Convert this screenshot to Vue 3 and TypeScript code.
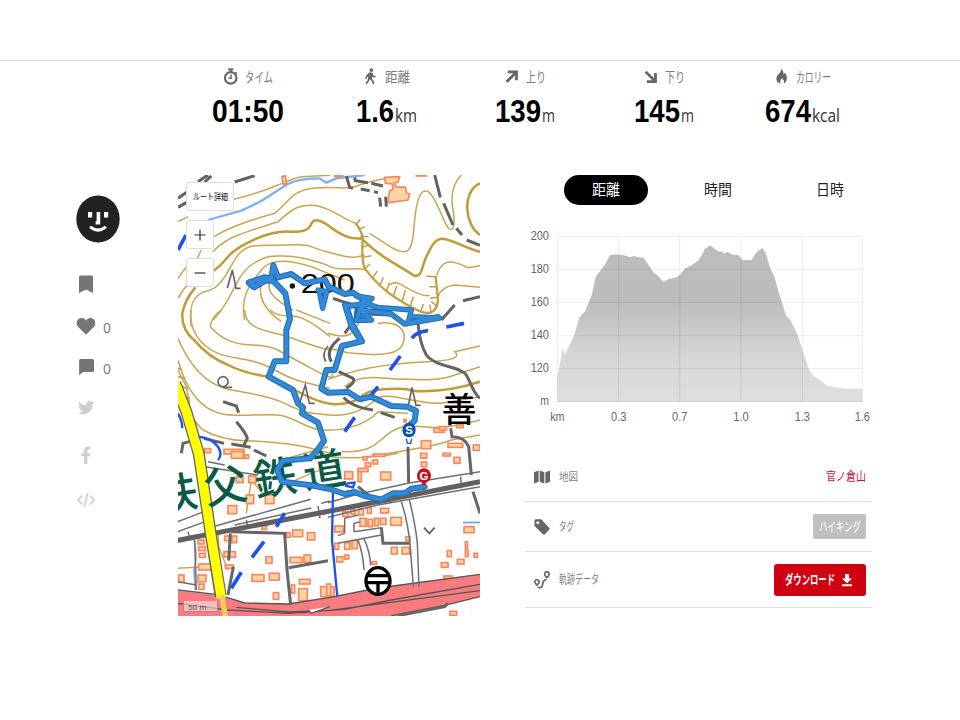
<script setup lang="ts">
import { h } from "vue";

interface FitProps {
  text: string;
  w: number;
  size: number;
}

// single line of text squeezed to a fixed width
const FitText = (p: FitProps) =>
  h("svg", { width: p.w, height: p.size, overflow: "visible", style: { display: "block" } }, [
    h(
      "text",
      {
        x: 0,
        y: p.size * 0.87,
        "font-size": p.size,
        fill: "currentColor",
        textLength: p.w,
        lengthAdjust: "spacingAndGlyphs",
      },
      p.text,
    ),
  ]);
FitText.props = ["text", "w", "size"];

const stats = [
  { icon: "time", label: "タイム", lw: 28, value: "01:50", vw: 72, unit: "", uw: 0 },
  { icon: "walk", label: "距離", lw: 25, value: "1.6", vw: 38, unit: "km", uw: 22 },
  { icon: "up", label: "上り", lw: 20, value: "139", vw: 46, unit: "m", uw: 13 },
  { icon: "down", label: "下り", lw: 20, value: "145", vw: 46, unit: "m", uw: 13 },
  { icon: "fire", label: "カロリー", lw: 35, value: "674", vw: 46, unit: "kcal", uw: 28 },
];

const tabs = ["距離", "時間", "日時"];

const contours = [
  "M0 155L30 140M168 88Q240 70 300 45T370 20L456 16",
  "M108 200Q140 180 180 165T290 130C330 100 340 60 410 54S500 60 530 50S600 25 660 20",
  "M104 245Q140 210 180 195T300 155C330 130 350 105 400 106S500 150 533 160",
  "M30 320Q60 260 70 240M0 325L25 290M0 385Q20 350 30 345",
  "M40 470C30 400 50 370 90 362S150 300 175 262S230 225 290 226S370 218 400 230S500 262 530 262L560 256",
  "M105 450C160 400 170 320 220 285S300 258 330 259S430 275 456 290S530 290 565 300",
  "M200 450C185 380 215 345 250 300S370 280 400 290L500 330",
  "M310 455C260 420 240 380 250 340S290 325 300 330M345 420C290 390 265 365 275 335",
  "M40 420C30 480 70 530 120 550S220 560 290 600S400 640 456 655",
  "M130 420Q100 440 97 470Q140 520 210 524T300 540T400 595T460 612",
  "M200 420C200 470 250 480 300 492S400 530 456 540M275 420Q300 440 340 438T456 500M355 420L456 460",
  "M0 505C40 600 90 640 140 655S260 670 320 700S400 730 456 735S560 720 590 690S700 700 790 700L906 680",
  "M0 570C30 680 80 720 130 731S250 730 300 735S380 775 430 780S560 770 600 725L690 730",
  "M15 660Q30 740 75 780Q130 810 200 812T330 822T456 850",
  "M490 845C590 850 600 810 640 785S700 770 760 772S860 760 906 750",
  "M560 862Q640 850 720 835T820 810L906 795",
  "M575 190L640 232C690 260 700 240 705 200S712 80 735 65S780 110 800 155S835 175 825 120S830 35 850 15",
  "M635 345Q650 330 680 350Q740 385 755 375M775 320Q785 285 805 278T870 293L906 287M780 380Q790 350 830 345L906 352",
  "M600 460C680 450 690 500 670 530S580 555 510 548L450 535M450 490Q510 510 530 480T540 450",
  "M450 628Q500 610 570 595T750 575T830 545L906 528M500 650C550 610 600 625 660 627S780 635 830 615L906 590",
  "M0 1195Q80 1190 130 1188M120 1085L122 1130L150 1200M280 1000L220 930L205 1030M310 870L450 830",
  "M330 940L400 910L456 890M450 860Q560 870 660 850M0 600L25 650L35 700",
];

const thickContours = [
  "M108 302Q130 285 150 260T230 208T340 185T400 162T460 173T550 205Q590 245 640 275T710 318C735 318 730 290 745 260S770 205 795 206S860 235 906 245",
  "M52 352Q20 390 13 430Q10 480 50 512Q90 560 150 585Q200 610 270 620Q330 650 380 675T470 703Q530 700 550 680T630 657T700 662Q800 670 906 635",
  "M906 40C850 65 860 165 906 195",
];

const cliff = "M533 160Q550 180 554 205Q550 270 560 295Q600 350 660 388T740 428Q775 435 780 390L773 320";
const cliffTicks =
  "M535 162L547 148M541 180L560 170M547 198L572 200M554 232L572 225M556 262L580 257M562 294L576 282M585 322L598 303M606 345L616 322M626 362L634 338M645 382L656 348M672 396L682 360M696 412L706 380M728 425L736 402M760 430L755 404M779 410L760 395M779 382L756 385M774 350L754 350M773 320L745 319";

const thinLines = [
  "M0 1055L78 1025M0 1085L82 1055M112 1068L398 988M170 1065L400 1014M80 890L240 915M90 875L140 885M430 1000L456 993",
  "M30 1085L34 1100M205 1050L208 1065M420 1008L426 1045M848 920L850 955M640 985L637 1000",
  "M450 998L530 975L690 940L906 905M450 1042L600 1005L906 950",
  "M670 995Q688 1050 696 1120L706 1250M694 990Q712 1060 718 1120L723 1250",
  "M500 1090L500 1045L540 1035M528 1085L528 1060L545 1056M528 1085L610 1073M480 1097L500 1090M480 1120L610 1095M540 1110Q555 1150 558 1200M557 1105Q575 1140 578 1185",
  "M50 1110L55 1260M505 435L520 475M0 1235L55 1245",
];

const roads = [
  "M160 1085L320 1090L327 1200L338 1305",
  "M157 1090L152 1172M166 1190L150 1275M332 1193L450 1172",
  "M720 460Q725 520 745 555C770 590 850 590 865 615S885 670 906 685",
  "M690 830L692 938M818 775L822 800Q860 800 872 830L880 915",
  "M610 1072L615 1120L695 1120M540 950L600 998L640 990M885 965L906 1030M660 1337L800 1310L810 1300",
  "M10 850L15 820L45 812",
];

const dashes = [
  "M770 15L787 82M797 100L825 165M835 175L852 195M866 210L906 226M906 380L855 392M830 405L790 450",
  "M505 18L515 52L525 55M548 57L575 62M588 65L600 68M530 22L532 32L570 38M580 40L615 48M605 83L608 110M623 80L625 110",
  "M0 85L50 50M0 112L30 95M60 35L90 15M80 36L100 18M170 36L230 17",
  "M135 695L175 708L182 728M175 755Q205 790 208 805L198 825M78 805L138 820M160 822L218 832M228 840L265 858",
  "M482 605L525 625Q535 635 505 655M497 682Q520 710 585 720M608 728L650 742M460 575Q440 540 485 505M500 490L515 470M465 385L525 405M575 433L650 435",
];

const blueDashes =
  "M0 240L24 195M805 471L858 460M702 505Q715 485 750 482M636 600L667 558M580 675L600 650M500 785L530 742M222 1162L258 1115M160 1255L190 1207M295 1070L320 1030";

const streams = "M90 150L190 122Q240 100 270 80T330 42Q360 25 425 25L445 38L475 25L560 15";

const buildings: number[][] = [
  [80, 836, 18, 12], [138, 838, 60, 14], [160, 845, 36, 20], [200, 855, 12, 10],
  [150, 1007, 26, 24], [205, 975, 22, 26], [212, 918, 22, 20], [262, 975, 26, 26], [175, 920, 20, 18],
  [60, 1110, 18, 12], [62, 1130, 20, 12], [64, 1150, 18, 12], [62, 1182, 38, 18], [60, 1215, 24, 20],
  [62, 1242, 16, 16], [2, 1215, 16, 22], [140, 1098, 18, 14], [162, 1098, 14, 20], [138, 1145, 34, 16],
  [142, 1185, 24, 10], [344, 1080, 30, 20], [388, 1088, 22, 22], [264, 1160, 18, 20], [222, 1214, 36, 20],
  [274, 1210, 30, 20], [286, 1268, 16, 20], [336, 1162, 36, 16], [378, 1155, 20, 22], [364, 1228, 32, 14],
  [362, 1256, 26, 36], [428, 1250, 40, 30], [340, 1245, 10, 24], [252, 1068, 14, 10], [326, 1088, 10, 14],
  [730, 812, 28, 24], [730, 852, 14, 12], [810, 820, 44, 12], [768, 775, 30, 12], [785, 770, 20, 10],
  [836, 765, 20, 8], [886, 825, 20, 16], [795, 850, 22, 8], [678, 748, 6, 8], [555, 860, 12, 10],
  [585, 852, 36, 7], [500, 905, 24, 22], [540, 895, 30, 10], [540, 905, 10, 30], [562, 878, 16, 12],
  [608, 906, 30, 24], [585, 870, 14, 12], [828, 862, 18, 18], [728, 850, 18, 14], [730, 876, 16, 14],
  [494, 1025, 16, 14], [518, 1018, 14, 14], [542, 1015, 14, 20], [568, 1012, 12, 18], [608, 1015, 24, 14],
  [638, 1042, 32, 24], [546, 1045, 18, 24], [570, 1048, 14, 22], [590, 1045, 12, 22], [608, 1045, 16, 18],
  [470, 1068, 26, 18], [500, 1118, 16, 20], [522, 1112, 16, 24], [476, 1160, 18, 16], [500, 1155, 12, 12],
  [640, 1132, 18, 20], [672, 1132, 22, 20], [684, 1100, 12, 12], [470, 1120, 12, 18], [582, 1175, 14, 8],
  [858, 1070, 30, 18], [808, 1142, 12, 18], [790, 1178, 20, 14], [838, 1168, 20, 14], [862, 1115, 6, 20],
  [862, 1140, 8, 20], [888, 1150, 10, 12], [798, 1218, 24, 8], [816, 1324, 20, 12], [446, 1242, 12, 36],
  [470, 15, 24, 4], [715, 13, 30, 5],
];

const track =
  "M693 768L710 752L714 722L688 710L640 708L580 680L545 688L510 666L450 668L430 656L445 600L470 600L492 528L552 514L522 462L505 408L540 405L565 395L525 368L500 372L452 350L440 328L380 340L340 312L300 322L286 286L280 325L258 322L212 338L228 352L262 332L285 332L322 370L336 446L325 480L325 574L290 574L272 620L345 660L360 700L375 712L372 730L420 758L438 812L415 845L395 865L315 872L297 900L312 935L400 946L456 957L500 972L530 966L560 978L610 988L645 970L680 970L700 956L740 950";
const trackKnots = [
  "M780 440L690 460L700 420L600 412L560 400L545 420L535 452L580 450L548 420L640 432L680 462L785 444L700 440",
  "M500 405L520 470L548 512M425 370L434 415L446 365L420 360M535 378L582 385L560 410M215 336L230 348L250 334",
];

const elevation =
  "M112 712L112 635L120 595L129 550L134 572L147 545L163 510L178 460L185 450L196 440L203 420L214 395L228 335L240 320L256 297L270 272L285 269L312 272L330 278L340 274L355 278L371 279L390 308L402 325L415 335L430 352L445 344L470 338L482 328L494 312L515 302L534 288L546 270L554 253L571 242L588 256L600 262L606 260L613 267L622 261L638 270L655 271L668 287L695 286L708 264L727 249L737 264L752 315L763 335L775 380L790 427L799 454L811 467L832 508L848 560L868 615L882 635L903 648L922 663L945 668L980 672L1027 672L1027 712Z";
const gridX = [112, 296, 479, 663, 847, 1027];
const gridY = [215, 314, 413, 513, 612, 711];
const yLabels = ["200", "180", "160", "140", "120", "m"];
const xLabels = ["km", "0.3", "0.7", "1.0", "1.3", "1.6"];
const axisWidth: Record<string, number> = { m: 26, km: 43 };
</script>

<template>
  <div class="page">
    <header class="topbar"></header>

    <section class="stats">
      <div v-for="s in stats" :key="s.label" class="stat">
        <div class="stat-label">
          <svg class="stat-icon" viewBox="0 0 14 16">
            <g v-if="s.icon === 'time'" fill="none" stroke="currentColor">
              <circle cx="7.2" cy="9.3" r="5.4" stroke-width="2" />
              <path d="M4.8 1.2h4.800M7.200 1v3M11.400 4.200l1.400 1.200" stroke-width="2" />
              <path d="M7.600 6.200v3.400H5" stroke-width="1.300" />
            </g>
            <g v-else-if="s.icon === 'walk'">
              <circle cx="7.800" cy="2" r="1.700" fill="currentColor" />
              <path d="M5.600 4.200h3.200l.8 2.600 2.400 1.200-.6 1.200-2.600-1-.5 1.700 1.600 2 .7 3.100H9l-.7-2.500-1.900-1.900-.9 2.200-2.200 2.400-1.100-1 2-2.400.8-4-1.200.8-.5 1.800H2l.7-2.900z" fill="currentColor" />
            </g>
            <path v-else-if="s.icon === 'up'" d="M3.500 3.600h8.200v8M11.200 4.200L2.400 13" fill="none" stroke="currentColor" stroke-width="2.600" />
            <path v-else-if="s.icon === 'down'" d="M3.500 12.800h8.200v-8M11.200 12.200L2.400 3.600" fill="none" stroke="currentColor" stroke-width="2.600" />
            <path v-else d="M6.600 1.200c2 1.200 2.600 2.600 2.200 4.800l1.500-1.600c1.300 2 2 3.800 1.700 6-.3 2-1.300 3.400-2.800 4.200.6-2 .1-3.400-1.700-5-1.500 1.600-2.200 3-1.700 5C3.400 13.800 2.200 12.200 2.200 10c0-2 1-3.200 2.400-4.600C6 4 6.700 2.800 6.600 1.200z" fill="currentColor" />
          </svg>
          <FitText :text="s.label" :w="s.lw" :size="14" />
        </div>
        <div class="stat-value">
          <FitText class="num" :text="s.value" :w="s.vw" :size="32" />
          <FitText v-if="s.unit" class="unit" :text="s.unit" :w="s.uw" :size="19" />
        </div>
      </div>
    </section>

    <main class="content">
      <aside class="side">
        <svg class="avatar" viewBox="0 0 44 48">
          <ellipse cx="22" cy="24" rx="21.700" ry="23.600" fill="#222" />
          <path d="M12 17h4.200v5.500H12zM28 17h4.200v5.500H28zM20.600 17h3.600v12.400h-4.600v-3.200h1z" fill="#fff" />
          <path d="M15 32.500q7 5.200 14 0" fill="none" stroke="#fff" stroke-width="3" stroke-linecap="round" />
        </svg>
        <div class="side-row bookmark">
          <svg viewBox="0 0 20 20"><path d="M4.500 1.500h11q1.500 0 1.500 1.500v16l-7-3.500L3 19V3q0-1.500 1.500-1.500z" fill="currentColor" /></svg>
        </div>
        <div class="side-row like">
          <svg viewBox="0 0 20 20"><path d="M10 18.800L2 10.800C-.6 7.600 1 2 5.400 2 7.600 2 9.200 3.200 10 4.600 10.800 3.200 12.400 2 14.600 2 19 2 20.600 7.600 18 10.800z" fill="currentColor" /></svg>
          <FitText class="count" text="0" :w="8" :size="14" />
        </div>
        <div class="side-row">
          <svg viewBox="0 0 20 20"><path d="M4.500 2h12q1.500 0 1.500 1.500v10q0 1.500-1.500 1.500H7l-3.900 3.200V3.500Q3.100 2 4.500 2z" fill="currentColor" /></svg>
          <FitText class="count" text="0" :w="8" :size="14" />
        </div>
        <div class="side-row faint">
          <svg viewBox="0 0 20 20"><path d="M18.500 4.500c-.6.3-1.200.5-1.900.6.7-.4 1.200-1 1.400-1.800-.6.4-1.300.6-2.100.8a3.400 3.400 0 0 0-5.800 3.100C7.300 7.100 4.800 5.700 3 3.600c-.9 1.600-.4 3.500 1.100 4.500-.5 0-1-.2-1.500-.4 0 1.600 1.100 3 2.700 3.300-.5.200-1 .2-1.500.1.400 1.300 1.700 2.300 3.100 2.300A6.700 6.700 0 0 1 2 14.800c1.500 1 3.300 1.500 5.200 1.500 6.200 0 9.800-5.200 9.600-10 .7-.5 1.300-1.100 1.700-1.800z" fill="currentColor" /></svg>
        </div>
        <div class="side-row faint fb">
          <svg viewBox="0 0 20 20"><path d="M8 19v-7.700H5.400V8.200H8V6c0-2.900 1.700-4.600 4.300-4.600l2.300.2v2.700h-1.400c-1.300 0-1.800.8-1.800 1.700v2.200h3l-.5 3.100h-2.500V19z" fill="currentColor" /></svg>
        </div>
        <div class="side-row faint embed">
          <svg viewBox="0 0 20 20"><path d="M6.200 5.500L2 10l4.200 4.500M13.800 5.500L18 10l-4.200 4.500M11.600 3L8.400 17" fill="none" stroke="currentColor" stroke-width="1.800" /></svg>
        </div>
      </aside>

      <div class="map">
        <svg class="map-canvas" viewBox="0 15 906 1323" preserveAspectRatio="none">
          <rect x="0" y="15" width="906" height="1323" fill="#fff" />
          <g fill="none" stroke="#c9a550" stroke-width="4.500">
            <path v-for="(d, i) in contours" :key="i" :d="d" />
          </g>
          <g fill="none" stroke="#c39a35" stroke-width="7.500">
            <path v-for="(d, i) in thickContours" :key="i" :d="d" />
          </g>
          <path :d="cliff" fill="none" stroke="#c4a040" stroke-width="7" />
          <path :d="cliffTicks" stroke="#c4a040" stroke-width="4.500" />
          <path d="M0 595L12 600M0 620L22 625M8 650L30 655M18 680L36 685" stroke="#c4a040" stroke-width="5" />
          <path :d="streams" fill="none" stroke="#7fb0f5" stroke-width="7" />
          <path d="M48 1110Q60 1160 48 1200L52 1260M855 1058L906 1057" fill="none" stroke="#6fa6ee" stroke-width="5" />

          <g fill="#ffd5a8" stroke="#f7875c" stroke-width="5">
            <rect v-for="(b, i) in buildings" :key="i" :x="b[0]" :y="b[1]" :width="b[2]" :height="b[3]" />
            <path d="M620 22L665 20L660 36L650 38L652 50L682 52L686 70L695 72L690 90L630 98L635 62L645 58L643 42L622 40z" />
            <path d="M312 20L322 17L326 40L316 43z" />
          </g>

          <path d="M-5 1262L120 1276L200 1300L330 1302L456 1282L600 1254L906 1213L906 1280L800 1306L630 1345L-5 1345z" fill="#f87b80" />
          <g fill="none" stroke="#555" stroke-width="4">
            <path d="M0 1260L120 1274L200 1299L330 1302L456 1282L600 1254L906 1213" />
            <path d="M0 1300L150 1320L330 1330L500 1318L640 1290L906 1243M175 1312L330 1326L450 1322L906 1262M640 1337L800 1306L906 1280M360 1327L385 1328" />
          </g>
          <path d="M390 1320L400 1330L456 1310" fill="#fff" stroke="#555" stroke-width="4" />

          <g fill="none" stroke="#707070" stroke-width="4.500">
            <path v-for="(d, i) in thinLines" :key="i" :d="d" />
          </g>
          <g fill="none" stroke="#666" stroke-width="9">
            <path v-for="(d, i) in roads" :key="i" :d="d" />
          </g>
          <g fill="none" stroke="#626262" stroke-width="9">
            <path v-for="(d, i) in dashes" :key="i" :d="d" />
          </g>
          <path d="M-5 1112L150 1082L456 1023L906 935" fill="none" stroke="#606060" stroke-width="15" />
          <g fill="none">
            <path d="M-8 640L25 725L62 850L98 1090L128 1278" stroke="#666" stroke-width="36" />
            <path d="M-8 640L25 725L62 850L98 1090L130 1285" stroke="#ffff00" stroke-width="28" />
            <path d="M131 1274L142 1340" stroke="#ffcc55" stroke-width="16" />
            <path d="M0 730Q15 760 12 775M62 800Q100 805 118 828T120 870M465 960L462 1110L478 1280M505 948Q500 938 530 938L525 952z" stroke="#2050f0" stroke-width="7" />
            <path :d="blueDashes" stroke="#1e50f0" stroke-width="11" />
          </g>

          <!-- coniferous, broadleaf and field marks -->
          <g fill="none" stroke="#666" stroke-width="5">
            <path d="M148 354L163 300L174 355L188 355M366 696L382 645L394 700L410 700M692 702L702 652L714 706L728 706" />
            <path d="M443 575Q430 550 450 528" />
            <circle cx="135" cy="635" r="15" />
            <path d="M135 652L162 652" />
            <path d="M738 1073L754 1090L770 1073" stroke-width="6" />
          </g>

          <g class="place" fill="#0b5a45" transform="rotate(-9 0 1020)">
            <text x="-62" y="1017" textLength="578">秩父鉄道</text>
          </g>
          <text class="kanji" x="791" y="755">善</text>
          <circle cx="343" cy="348" r="8" fill="#111" />
          <text class="height" x="368" y="370" textLength="162" lengthAdjust="spacingAndGlyphs">200</text>

          <g>
            <ellipse cx="600" cy="1233" rx="36" ry="40" fill="#fff" stroke="#000" stroke-width="10" />
            <path d="M570 1217H630M566 1238H634M600 1238V1270" stroke="#000" stroke-width="10" />
          </g>

          <g fill="none" stroke-linejoin="round" stroke-linecap="round">
            <path d="M536 412L580 450L532 452zM426 362L446 366L434 415z" fill="#2f88d8" stroke="#236fb5" stroke-width="12" />
            <path :d="track" stroke="#236fb5" stroke-width="18" />
            <path v-for="(d, i) in trackKnots" :key="i" :d="d" stroke="#236fb5" stroke-width="16" />
            <path :d="track" stroke="#328ad8" stroke-width="11" />
            <path v-for="(d, i) in trackKnots" :key="'k' + i" :d="d" stroke="#328ad8" stroke-width="10" />
          </g>

          <path d="M685 806L688 820L698 820L701 806" fill="#fff" stroke="#1559b5" stroke-width="4" />
          <ellipse cx="693" cy="780" rx="20" ry="22" fill="#0d50b0" />
          <text class="pin" x="693" y="792">S</text>
          <path d="M726 930L738 948L750 930z" fill="#c8101c" />
          <ellipse cx="738" cy="917" rx="21" ry="22" fill="#c8101c" />
          <text class="pin" x="738" y="929">G</text>

          <path d="M342 15V1338M880 15V1338M0 384H906M0 965H906" stroke="#88889a" stroke-opacity=".13" stroke-width="2" />
        </svg>
        <div class="map-controls">
          <button class="detail"><FitText text="ルート詳細" :w="35" :size="9" /></button>
          <button><svg viewBox="0 0 12 12"><path d="M.5 6H11.500M6 .500V11.500" stroke="#333" stroke-width="1.200" /></svg></button>
          <button><svg viewBox="0 0 12 12"><path d="M.5 6H11.500" stroke="#333" stroke-width="1.200" /></svg></button>
        </div>
        <div class="scale">50 m</div>
      </div>

      <section class="detail-panel">
        <nav class="tabs">
          <button v-for="(t, i) in tabs" :key="t" :class="{ active: i === 0 }">
            <FitText :text="t" :w="28" :size="15" />
          </button>
        </nav>

        <svg class="chart" viewBox="0 190 1080 600">
          <defs>
            <linearGradient id="elev" gradientUnits="userSpaceOnUse" x1="0" y1="215" x2="0" y2="711">
              <stop offset="0" stop-color="#bdbdbd" />
              <stop offset=".38" stop-color="#bcbcbc" />
              <stop offset=".78" stop-color="#d9d9d9" />
              <stop offset="1" stop-color="#dedede" />
            </linearGradient>
          </defs>
          <path :d="elevation" fill="url(#elev)" />
          <g stroke="#000" stroke-opacity=".075" stroke-width="3">
            <path v-for="x in gridX" :key="x" :d="`M${x} 215V711`" />
            <path v-for="y in gridY" :key="y" :d="`M112 ${y}H1027`" />
          </g>
          <text
            v-for="(t, i) in yLabels"
            :key="t"
            class="axis y"
            x="87"
            :y="(gridY[i] ?? 0) + 10"
            :textLength="axisWidth[t] ?? 55"
            lengthAdjust="spacingAndGlyphs"
          >{{ t }}</text>
          <text
            v-for="(t, i) in xLabels"
            :key="t"
            class="axis x"
            :x="gridX[i]"
            y="770"
            :textLength="axisWidth[t] ?? 46"
            lengthAdjust="spacingAndGlyphs"
          >{{ t }}</text>
        </svg>

        <ul class="info">
          <li>
            <svg class="info-icon" viewBox="0 0 16 16"><path d="M0 3.200L4.600 1.500v11.300L0 14.500zM5.700 1.500l4.600 1.700v11.300l-4.600-1.700zM11.400 3.200L16 1.500v11.300l-4.600 1.700z" fill="currentColor" /></svg>
            <FitText text="地図" :w="19" :size="11" />
            <a class="mountain"><FitText text="官ノ倉山" :w="40" :size="12" /></a>
          </li>
          <li>
            <svg class="info-icon" viewBox="0 0 16 16"><path fill-rule="evenodd" d="M.5 1.500Q.5.300 1.700.300H7.200L15.400 9Q16 9.800 15.400 10.500L10.600 15.500Q9.900 16 9.200 15.400L.5 7zM3.800 2.300a1.500 1.500 0 1 0 .01 0z" fill="currentColor" /></svg>
            <FitText text="タグ" :w="15" :size="12" />
            <span class="tag"><FitText text="ハイキング" :w="42" :size="13" /></span>
          </li>
          <li>
            <svg class="info-icon route" viewBox="0 0 16 18">
              <g fill="none" stroke="currentColor" stroke-width="1.700">
                <path d="M3 14.200Q.5 11.800.9 10.500a2.200 2.200 0 0 1 4.300 0Q5.500 11.800 3 14.200zM12.900 6.500Q10.500 4.500 10.700 3a2.200 2.200 0 0 1 4.400 0Q15.300 4.500 12.900 6.500z" />
                <path d="M3.500 16.300Q7.800 17.500 8.500 14.200C9 10.500 9 9.600 12.700 8.300" />
              </g>
            </svg>
            <FitText text="軌跡データ" :w="40" :size="12" />
            <button class="download">
              <FitText text="ダウンロード" :w="50" :size="13" />
              <svg viewBox="0 0 12 14"><path d="M4 1h4v4.500h3L6 10.300 1 5.500h3zM1 11.300h10v2H1z" fill="#fff" /></svg>
            </button>
          </li>
        </ul>
      </section>
    </main>
  </div>
</template>

<style>
body {
  background: #fff;
}
</style>

<style scoped>
.page {
  width: 960px;
  height: 720px;
  box-sizing: border-box;
  overflow: hidden;
  font-family: "Open Sans", "Noto Sans CJK JP", sans-serif;
  color: #757575;
}

.topbar {
  height: 60px;
  border-bottom: 1px solid #d6d6d6;
}

.stats {
  display: grid;
  grid-template-columns: repeat(5, 1fr);
  width: 693px;
  margin-left: 179px;
  padding-top: 7px;
  height: 107px;
}

.stat-label {
  display: flex;
  align-items: center;
  justify-content: center;
  gap: 7px;
  height: 17px;
  color: #7d7d7d;
}

.stat-icon {
  width: 15px;
  height: 17px;
  color: #666;
}

.stat-value {
  display: flex;
  justify-content: center;
  align-items: flex-end;
  gap: 1px;
  height: 41px;
}

.num {
  color: #000;
  font-family: "Liberation Sans", sans-serif;
  font-weight: bold;
}

.unit {
  color: #333;
  margin-bottom: 2px;
}

.content {
  display: flex;
}

.side {
  width: 102.5px;
  padding: 20px 0 0 75.5px;
  flex: none;
  box-sizing: content-box;
}

.side {
  box-sizing: border-box;
  width: 178px;
}

.avatar {
  display: block;
  width: 44px;
  height: 48px;
}

.side-row {
  display: flex;
  align-items: center;
  gap: 7px;
  height: 20px;
  margin-top: 21px;
}

.side-row > svg:first-child {
  width: 20px;
  height: 20px;
}

.side-row.bookmark {
  margin-top: 31px;
}

.side-row.like {
  margin-top: 22px;
}

.count {
  margin-top: 3px;
}

.faint {
  color: #cfcfcf;
}

.side-row.fb {
  margin-top: 27px;
}

.side-row.embed {
  margin-top: 25px;
}

.map {
  position: relative;
  width: 302px;
  height: 441px;
}

.map-canvas {
  display: block;
  width: 302px;
  height: 441px;
}

.place {
  font-family: "Noto Sans CJK JP", sans-serif;
  font-size: 128px;
  font-weight: 500;
}

.kanji {
  font-family: "Noto Sans CJK JP", sans-serif;
  font-size: 104px;
  fill: #000;
  font-weight: 500;
}

.height {
  font-family: "Liberation Sans", sans-serif;
  font-size: 84px;
  fill: #111;
}

.pin {
  font-family: "Liberation Sans", sans-serif;
  font-size: 34px;
  font-weight: bold;
  fill: #fff;
  text-anchor: middle;
}

.map-controls {
  position: absolute;
  top: 7px;
  left: 8px;
}

.map-controls button {
  display: flex;
  align-items: center;
  justify-content: center;
  box-sizing: border-box;
  width: 28px;
  height: 29px;
  margin-bottom: 9px;
  padding: 0;
  border: 1px solid #ddd;
  border-radius: 3px;
  background: #fff;
  color: #111;
  font-family: inherit;
}

.map-controls button.detail {
  width: 48px;
}

.map-controls svg {
  width: 12px;
  height: 12px;
}

.map-controls .detail svg {
  width: 35px;
  height: 9px;
}

.scale {
  position: absolute;
  left: 5px;
  bottom: 4px;
  width: 35px;
  height: 11px;
  box-sizing: border-box;
  padding-left: 4px;
  border: 1px solid #b08a8a;
  border-top: 0;
  background: rgba(255, 255, 255, 0.5);
  font-size: 8px;
  line-height: 12px;
  color: #444;
}

.detail-panel {
  width: 360px;
  margin-left: 40px;
}

.tabs {
  display: flex;
  gap: 28px;
  margin-left: 44px;
}

.tabs button {
  display: flex;
  align-items: center;
  justify-content: center;
  width: 84px;
  height: 30px;
  padding: 0 0 1px;
  border: 0;
  border-radius: 15px;
  background: none;
  color: #222;
  font-family: inherit;
}

.tabs button.active {
  background: #000;
  color: #fff;
}

.chart {
  display: block;
  width: 360px;
  height: 200px;
  margin-top: 23px;
}

.axis {
  font-family: "Liberation Sans", sans-serif;
  font-size: 37px;
  fill: #666;
}

.axis.y {
  text-anchor: end;
}

.axis.x {
  text-anchor: middle;
}

.info {
  list-style: none;
  margin: 24px 0 0 5px;
  padding: 0;
  width: 347px;
}

.info li {
  display: flex;
  align-items: center;
  box-sizing: border-box;
  height: 50px;
  padding: 0 6px 0 9px;
  border-bottom: 1px solid #dedede;
  color: #808080;
}

.info li:last-child {
  height: 56px;
}

.info-icon {
  width: 16px;
  height: 16px;
  margin-right: 9px;
  color: #666;
}

.info-icon.route {
  height: 18px;
}

.mountain {
  margin-left: auto;
  color: #c8102e;
}

.tag {
  margin-left: auto;
  padding: 6px 5px 6px 6px;
  border-radius: 2px;
  background: #c0c0c0;
  color: #fff;
}

.download {
  display: flex;
  align-items: center;
  gap: 6px;
  width: 92px;
  height: 32px;
  margin-left: auto;
  padding: 0 0 0 11px;
  border: 0;
  border-radius: 3px;
  background: #cf0010;
  color: #fff;
  font-family: inherit;
  font-weight: bold;
}

.download svg:last-child {
  width: 12px;
  height: 14px;
}
</style>
